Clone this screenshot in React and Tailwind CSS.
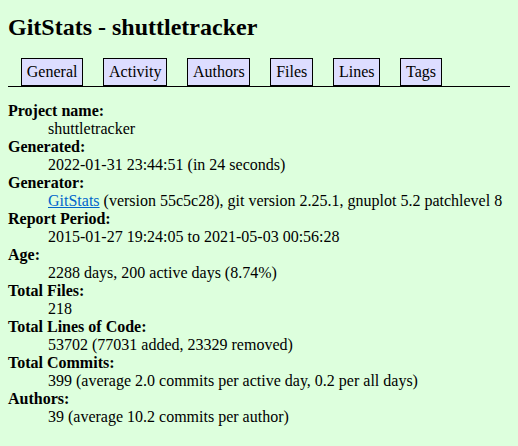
import React from 'react';

const tabs = ['General', 'Activity', 'Authors', 'Files', 'Lines', 'Tags'];

const stats = [
  ['Project name', 'shuttletracker'],
  ['Generated', '2022-01-31 23:44:51 (in 24 seconds)'],
  ['Generator', 'generator'],
  ['Report Period', '2015-01-27 19:24:05 to 2021-05-03 00:56:28'],
  ['Age', '2288 days, 200 active days (8.74%)'],
  ['Total Files', '218'],
  ['Total Lines of Code', '53702 (77031 added, 23329 removed)'],
  ['Total Commits', '399 (average 2.0 commits per active day, 0.2 per all days)'],
  ['Authors', '39 (average 10.2 commits per author)'],
];

const App = () => {
  return (
    <div className="min-h-screen bg-[#ddffdd] p-[8px] font-['Liberation_Serif','Times_New_Roman',serif] text-[16px] leading-[18px] text-black">
      <h1 className="mt-[5px] text-[24px] leading-[28px] font-bold">GitStats - shuttletracker</h1>

      <div className="mt-[17px] flex items-end border-b border-black pl-[3px]">
        {tabs.map((tab) => (
          <a
            key={tab}
            href="#"
            className="mx-[10px] block border border-black bg-[#ddddff] px-[4.8px] py-[4px] text-black no-underline"
          >
            {tab}
          </a>
        ))}
      </div>

      <dl className="mt-[15px]">
        {stats.map(([label, value]) => (
          <React.Fragment key={label}>
            <dt className="font-bold">{label}:</dt>
            <dd className="ml-[40px]">
              {value === 'generator' ? (
                <>
                  <a href="#" className="text-[#0066cc] underline">GitStats</a> (version 55c5c28), git version 2.25.1, gnuplot 5.2 patchlevel 8
                </>
              ) : value}
            </dd>
          </React.Fragment>
        ))}
      </dl>
    </div>
  );
};

export default App;
